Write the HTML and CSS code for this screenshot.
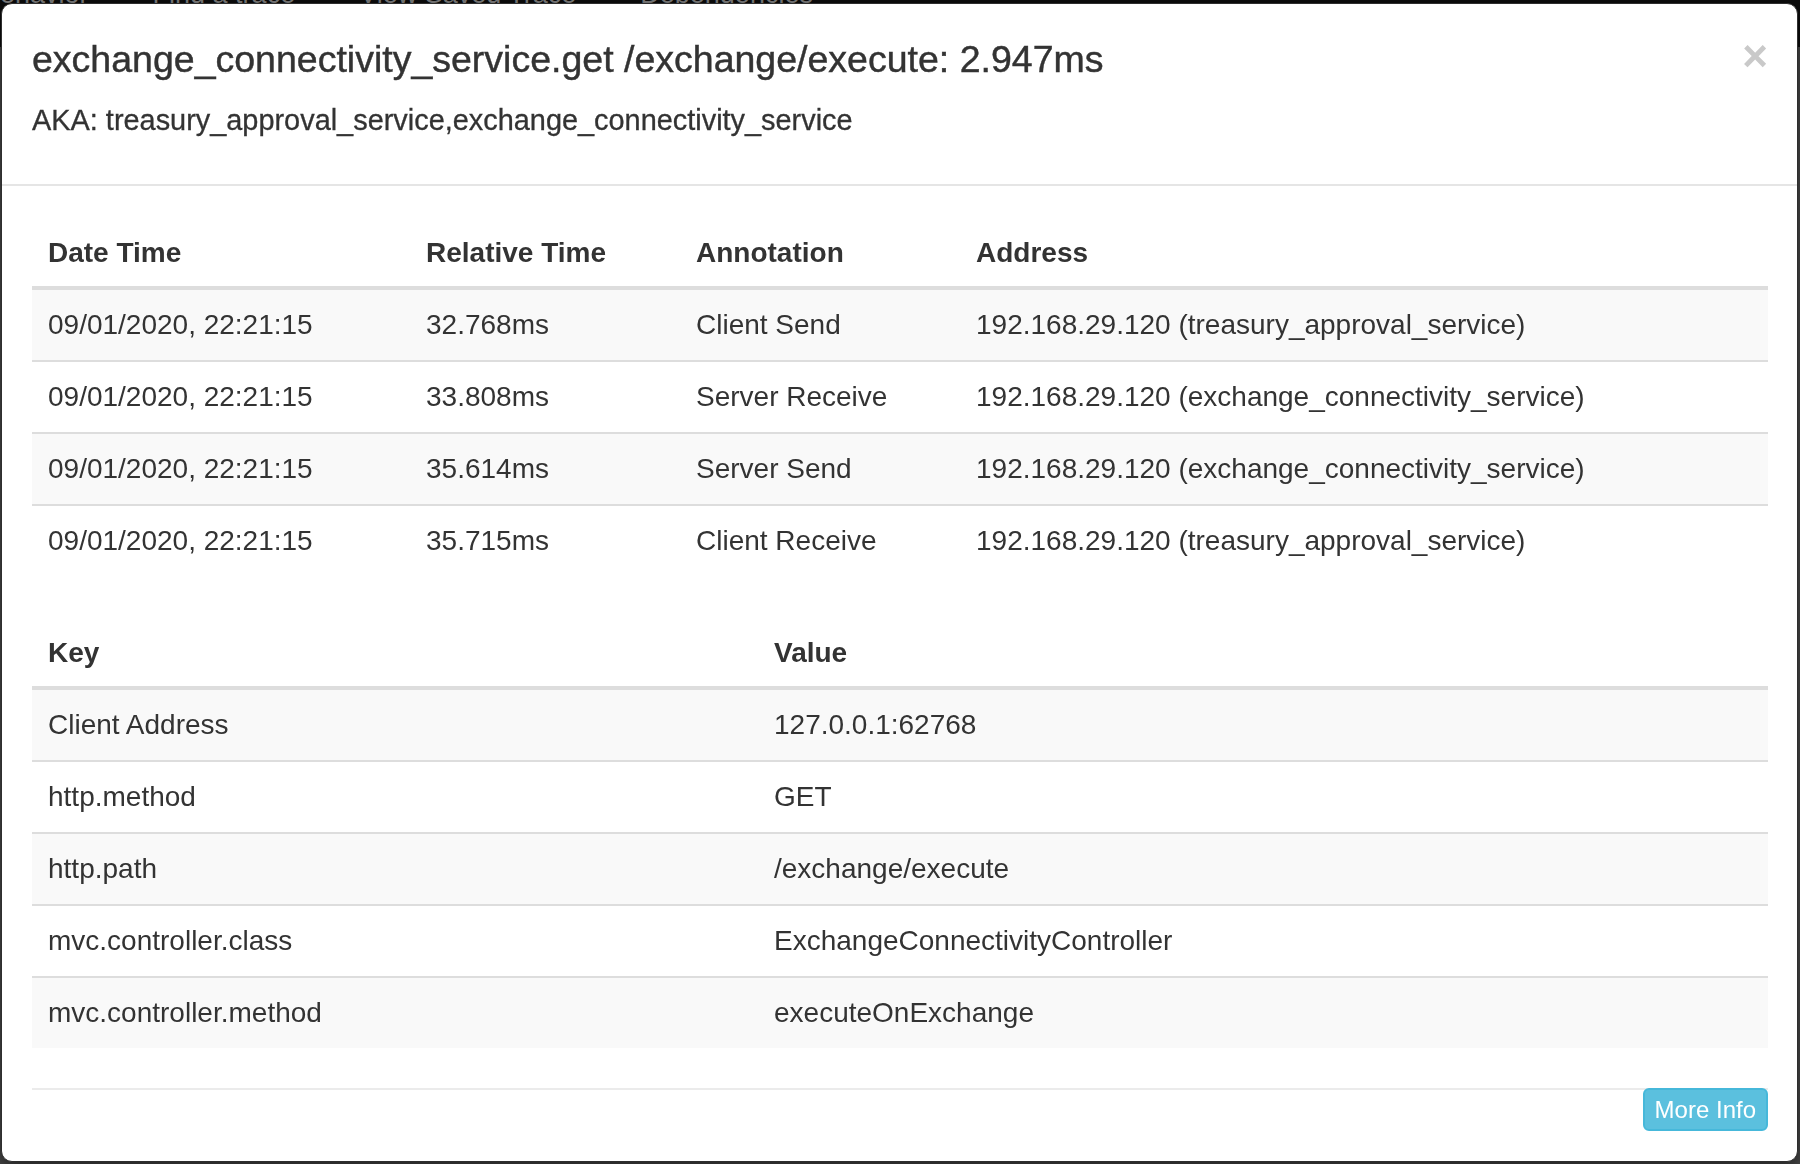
FILE: index.html
```html
<!DOCTYPE html>
<html lang="en">
<head>
<meta charset="utf-8">
<title>Span details</title>
<link rel="stylesheet" href="styles.css">
</head>
<body>
<nav class="navbar">
  <div class="nav-links">
    <span class="nav-link">Behavior</span>
    <span class="nav-link">Find a trace</span>
    <span class="nav-link">View Saved Trace</span>
    <span class="nav-link">Dependencies</span>
  </div>
</nav>

<div class="modal" role="dialog">
  <div class="modal-header">
    <div class="title-row">
      <h4 class="modal-title">exchange_connectivity_service.get /exchange/execute: 2.947ms</h4>
      <button class="close" type="button" aria-label="Close">×</button>
    </div>
    <h5 class="aka">AKA: treasury_approval_service,exchange_connectivity_service</h5>
  </div>

  <div class="modal-body">
    <table class="table table-annotations">
      <colgroup>
        <col class="col-date">
        <col class="col-rel">
        <col class="col-ann">
        <col class="col-addr">
      </colgroup>
      <thead>
        <tr><th>Date Time</th><th>Relative Time</th><th>Annotation</th><th>Address</th></tr>
      </thead>
      <tbody>
        <tr><td>09/01/2020, 22:21:15</td><td>32.768ms</td><td>Client Send</td><td>192.168.29.120 (treasury_approval_service)</td></tr>
        <tr><td>09/01/2020, 22:21:15</td><td>33.808ms</td><td>Server Receive</td><td>192.168.29.120 (exchange_connectivity_service)</td></tr>
        <tr><td>09/01/2020, 22:21:15</td><td>35.614ms</td><td>Server Send</td><td>192.168.29.120 (exchange_connectivity_service)</td></tr>
        <tr><td>09/01/2020, 22:21:15</td><td>35.715ms</td><td>Client Receive</td><td>192.168.29.120 (treasury_approval_service)</td></tr>
      </tbody>
    </table>

    <table class="table table-tags">
      <colgroup>
        <col class="col-key">
        <col class="col-value">
      </colgroup>
      <thead>
        <tr><th>Key</th><th>Value</th></tr>
      </thead>
      <tbody>
        <tr><td>Client Address</td><td>127.0.0.1:62768</td></tr>
        <tr><td>http.method</td><td>GET</td></tr>
        <tr><td>http.path</td><td>/exchange/execute</td></tr>
        <tr><td>mvc.controller.class</td><td>ExchangeConnectivityController</td></tr>
        <tr><td>mvc.controller.method</td><td>executeOnExchange</td></tr>
      </tbody>
    </table>
  </div>

  <div class="modal-footer">
    <div class="footer-inner">
      <button class="btn btn-info" type="button">More Info</button>
    </div>
  </div>
</div>
</body>
</html>
```

FILE: styles.css
```css
* {
  box-sizing: border-box;
}

html,
body {
  margin: 0;
  padding: 0;
}

body {
  width: 1800px;
  height: 1164px;
  overflow: hidden;
  background: #464646;
  color: #333;
  font-family: "Liberation Sans", Arial, Helvetica, sans-serif;
}

/* page behind the modal */
.navbar {
  height: 47px;
  background: #0c0c0c;
  overflow: hidden;
}

.nav-links {
  display: flex;
  gap: 64px;
  margin-top: -26px;
  margin-left: -18px;
  font-size: 27px;
  line-height: 40px;
  color: #7d7d7d;
  white-space: nowrap;
}

/* modal */
.modal {
  position: fixed;
  left: 1px;
  top: 3px;
  width: 1797px;
  background: #fff;
  border: 1px solid #2e2e2e;
  border-radius: 11px;
  box-shadow: 0 5px 15px rgba(0, 0, 0, 0.5);
}

.modal-header {
  padding: 30px 29px 29px 30px;
  border-bottom: 2px solid #e5e5e5;
}

.title-row {
  display: flex;
  justify-content: space-between;
  align-items: flex-start;
}

.modal-title {
  margin: 0;
  font-size: 37.5px;
  line-height: 50px;
  font-weight: 400;
  color: #333;
  white-space: nowrap;
  -webkit-text-stroke: 0.45px #333;
}

.close {
  margin: 0;
  padding: 0;
  border: 0;
  background: transparent;
  font-family: "Liberation Sans", Arial, sans-serif;
  font-size: 44px;
  font-weight: 700;
  line-height: 1;
  color: #c9c9c9;
  text-shadow: 0 1px 0 #fff;
  cursor: pointer;
}

.aka {
  margin: 21px 0 19px;
  font-size: 28.9px;
  line-height: 31px;
  font-weight: 400;
  color: #333;
  white-space: nowrap;
  -webkit-text-stroke: 0.3px #333;
}

.modal-body {
  padding: 30px 29px 0 30px;
}

.table {
  width: 100%;
  border-collapse: collapse;
  table-layout: fixed;
  margin-bottom: 40px;
  font-size: 28px;
  line-height: 40px;
  color: #333;
}

.table th {
  text-align: left;
  font-weight: 700;
  padding: 17px 16px 13px;
  vertical-align: bottom;
  border-bottom: 4px solid #ddd;
  white-space: nowrap;
}

.table td {
  padding: 15px 16px;
  border-top: 2px solid #ddd;
  white-space: nowrap;
}

.table tbody tr:nth-child(odd) {
  background: #f9f9f9;
}

.col-date { width: 378px; }
.col-rel { width: 270px; }
.col-ann { width: 280px; }
.col-key { width: 726px; }

.modal-footer {
  padding: 0 29px 30px 30px;
}

.footer-inner {
  display: flex;
  justify-content: flex-end;
  border-top: 2px solid #ebebeb;
}

.btn {
  font-family: "Liberation Sans", Arial, sans-serif;
  font-size: 24px;
  line-height: 35px;
  padding: 2px 10px;
  border-radius: 6px;
  cursor: pointer;
}

.btn-info {
  margin-top: -2px;
  color: #fff;
  background: #5bc0de;
  border: 2px solid #46b8da;
}
```
